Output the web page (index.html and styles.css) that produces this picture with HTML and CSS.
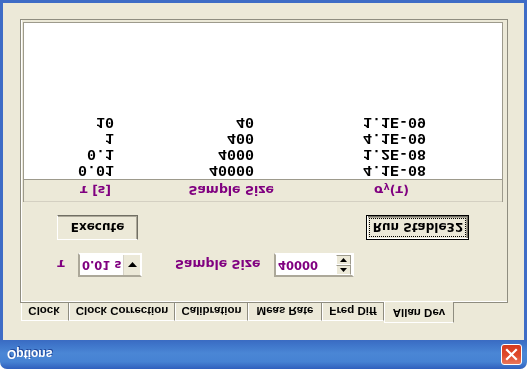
FILE: index.html
```html
<!DOCTYPE html>
<html>
<head>
<meta charset="utf-8">
<link rel="stylesheet" href="styles.css">
</head>
<body>
<div class="window">
  <div class="titlebar">
    <span class="title">Options</span>
    <span class="close"><svg width="13" height="13" viewBox="0 0 13 13"><path d="M2 2 L11 11 M11 2 L2 11" stroke="#fff" stroke-width="2.2" stroke-linecap="square"/></svg></span>
  </div>
  <div class="body">
    <div class="tabs">
      <div class="tab t-clock">Clock</div>
      <div class="tab t-corr">Clock Correction</div>
      <div class="tab t-cal">Calibration</div>
      <div class="tab t-meas">Meas Rate</div>
      <div class="tab t-freq">Freq Diff</div>
      <div class="tab tab-active t-allan">Allan Dev</div>
    </div>
    <div class="panel">
      <div class="controls">
        <span class="lbl tau">τ</span>
        <div class="combo">
          <span class="field-text">0.01 s</span>
          <span class="combo-btn"><svg width="9" height="5" viewBox="0 0 9 5"><path d="M0 0 H9 L4.5 5 Z" fill="#000"/></svg></span>
        </div>
        <span class="lbl size-lbl">Sample Size</span>
        <div class="spin">
          <span class="field-text">40000</span>
          <span class="spin-btns">
            <span class="spin-btn"><svg width="7" height="4" viewBox="0 0 7 4"><path d="M3.5 0 L7 4 H0 Z" fill="#000"/></svg></span>
            <span class="spin-btn"><svg width="7" height="4" viewBox="0 0 7 4"><path d="M0 0 H7 L3.5 4 Z" fill="#000"/></svg></span>
          </span>
        </div>
      </div>
      <div class="buttons">
        <div class="btn">Execute</div>
        <div class="btn btn-default"><span class="focus">Run Stable32</span></div>
      </div>
      <div class="list">
        <div class="list-head">
          <span class="h-a">τ [s]</span>
          <span class="h-b">Sample Size</span>
          <span class="h-c">σ<sub>y</sub>(τ)</span>
        </div>
        <div class="list-row"><span class="c-a">0.01</span><span class="c-b">40000</span><span class="c-c">4.1E-08</span></div>
        <div class="list-row"><span class="c-a">0.1</span><span class="c-b">4000</span><span class="c-c">1.2E-08</span></div>
        <div class="list-row"><span class="c-a">1</span><span class="c-b">400</span><span class="c-c">4.1E-09</span></div>
        <div class="list-row"><span class="c-a">10</span><span class="c-b">40</span><span class="c-c">1.1E-09</span></div>
      </div>
    </div>
  </div>
</div>
</body>
</html>
```

FILE: styles.css
```css
html, body {
  margin: 0;
  padding: 0;
  width: 527px;
  height: 369px;
  overflow: hidden;
  background: #ffffff;
}

.window {
  width: 527px;
  height: 369px;
  box-sizing: border-box;
  display: flex;
  flex-direction: column;
  background: #ece9d8;
  border-radius: 7px 7px 0 0;
  overflow: hidden;
  transform: scaleY(-1);
}

.titlebar {
  height: 29px;
  flex: none;
  display: flex;
  align-items: center;
  justify-content: space-between;
  padding: 0 5px 0 7px;
  box-sizing: border-box;
  background: linear-gradient(to bottom, #2f5fbd 0%, #4682d3 25%, #4a86d5 55%, #3e74c9 85%, #3a6bc2 100%);
}

.title {
  font: bold 12px "Liberation Sans", Arial, sans-serif;
  color: #ffffff;
  text-shadow: 1px 1px 0 #23489a;
}

.close {
  width: 21px;
  height: 21px;
  box-sizing: border-box;
  border: 1px solid #ffffff;
  border-radius: 3px;
  background: linear-gradient(to bottom, #e9775c 0%, #e04a2b 45%, #d43a1e 100%);
  display: flex;
  align-items: center;
  justify-content: center;
}

.body {
  flex: 1;
  display: flex;
  flex-direction: column;
  border: 3px solid #3e6cc6;
  border-top: 0;
  padding: 17px 16px 16px 17px;
}

.tabs {
  height: 21px;
  display: flex;
  align-items: flex-end;
  padding-left: 1px;
  margin-bottom: -1px;
  position: relative;
  z-index: 1;
}

.tab {
  height: 18px;
  margin-bottom: 1px;
  box-sizing: border-box;
  display: flex;
  align-items: center;
  justify-content: center;
  font: bold 11.5px "Liberation Sans", Arial, sans-serif;
  color: #000000;
  background: #ece9d8;
  border-top: 1px solid #ffffff;
  border-left: 1px solid #ffffff;
  border-right: 1px solid #8f8d80;
}

.t-clock { width: 48px; padding-right: 2px; }
.t-corr { width: 106px; }
.t-cal { width: 73px; }
.t-meas { width: 74px; }
.t-freq { width: 62px; }
.t-allan { width: 70px; }

.tab-active {
  height: 21px;
  margin-bottom: 0;
  padding-bottom: 2px;
}

.panel {
  flex: 1;
  display: flex;
  flex-direction: column;
  border: 1px solid #8f8d80;
  box-shadow: inset 1px 1px 0 #ffffff;
  padding: 25px 4px 2px 2px;
}

.controls {
  height: 24px;
  display: flex;
  align-items: center;
  padding-left: 34px;
}

.lbl {
  font: bold 12.5px "DejaVu Sans", Verdana, sans-serif;
  color: #800080;
}

.tau {
  width: 8px;
  margin-right: 13px;
}

.size-lbl {
  width: 86px;
  margin-left: 33px;
  margin-right: 13px;
  white-space: nowrap;
}

.combo, .spin {
  height: 24px;
  box-sizing: border-box;
  display: flex;
  align-items: stretch;
  background: #ffffff;
  border: 2px solid;
  border-color: #aca899 #ffffff #ffffff #aca899;
}

.combo { width: 64px; }
.spin { width: 80px; }

.field-text {
  flex: 1;
  display: flex;
  align-items: center;
  padding-left: 2px;
  font: bold 11.5px "DejaVu Sans", Verdana, sans-serif;
  color: #800080;
}

.combo-btn {
  width: 16px;
  display: flex;
  align-items: center;
  justify-content: center;
  background: #ece9d8;
  border-left: 1px solid #d6d3c6;
}

.spin-btns {
  width: 15px;
  margin-right: 1px;
  display: flex;
  flex-direction: column;
}

.spin-btn {
  flex: 1;
  display: flex;
  align-items: center;
  justify-content: center;
  background: #ece9d8;
  border: 1px solid;
  border-color: #ffffff #9d9a8c #9d9a8c #ffffff;
}

.buttons {
  display: flex;
  justify-content: space-between;
  padding: 0 34px 0 34px;
  margin-top: 13px;
}

.btn {
  height: 25px;
  box-sizing: border-box;
  display: flex;
  align-items: center;
  justify-content: center;
  font: bold 12px "DejaVu Sans", Verdana, sans-serif;
  color: #000000;
  background: #ece9d8;
  border: 1px solid;
  border-color: #ffffff #716f64 #716f64 #ffffff;
  box-shadow: inset -1px -1px 0 #aca899;
  width: 81px;
}

.btn-default {
  width: 103px;
  border: 1px solid #000000;
  box-shadow: inset 1px 1px 0 #ffffff, inset -1px -1px 0 #716f64, inset -2px -2px 0 #aca899;
}

.focus {
  border: 1px dotted #000000;
  padding: 2px 2px 1px 3px;
}

.list {
  flex: 1;
  margin-top: 13px;
  background: #ffffff;
  border: 1px solid #9d9a8c;
  border-top: 0;
}

.list-head {
  height: 23px;
  box-sizing: border-box;
  display: grid;
  grid-template-columns: 96px 160px 1fr;
  align-items: center;
  background: #ece9d8;
  border-top: 1px solid #d4d0c2;
  border-bottom: 1px solid #9d9a8c;
  font: bold 12.5px "DejaVu Sans", Verdana, sans-serif;
  color: #800080;
}

.h-a { text-align: right; padding-right: 9px; }
.h-b { text-align: right; padding-right: 6px; white-space: nowrap; }
.h-c { padding-left: 94px; }
.h-c sub { font-size: 9px; vertical-align: -1px; }

.list-head + .list-row { margin-top: 1px; }

.list-row {
  height: 16px;
  display: grid;
  grid-template-columns: 96px 160px 1fr;
  align-items: center;
  font: bold 15px "Liberation Mono", "Courier New", monospace;
  color: #000000;
}

.c-a { text-align: right; padding-right: 6px; }
.c-b { text-align: right; padding-right: 26px; }
.c-c { padding-left: 83px; }
```
